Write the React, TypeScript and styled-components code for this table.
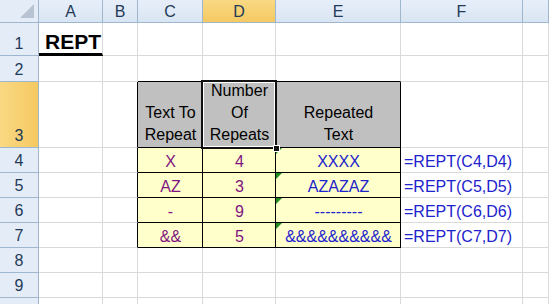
import React from "react";
import styled, { createGlobalStyle } from "styled-components";

const GRID = "#d9d9d9";
const HEAD_LINE = "#9eb6ce";
const INK = "#000";

type Kind = "blank" | "title" | "head" | "data";

interface CellSpec {
  text?: string;
  kind?: Kind;
  color?: string;
  align?: "left" | "center" | "right";
  right?: string;
  bottom?: string;
  flag?: boolean;
  selected?: boolean;
}

const GlobalStyle = createGlobalStyle`
  html, body {
    margin: 0;
    padding: 0;
    background: #fff;
    overflow: hidden;
  }
  body {
    font-family: "Liberation Sans", Arial, sans-serif;
  }
`;

const Sheet = styled.div`
  display: grid;
  grid-template-columns: 39px 64px 35px 65px 73px 125px 122px 1fr;
  grid-template-rows: 23px 33px 26px 66px repeat(6, 25px) 7px;
  width: 549px;
  height: 304px;
  overflow: hidden;
`;

const Corner = styled.div`
  position: relative;
  box-sizing: border-box;
  background: #e4ecf7;
  border-right: 1px solid ${HEAD_LINE};
  border-bottom: 1px solid ${HEAD_LINE};
`;

const CornerMark = styled.span`
  position: absolute;
  right: 4px;
  bottom: 4px;
  width: 0;
  height: 0;
  border-left: 14px solid transparent;
  border-bottom: 14px solid #b7c3d2;
`;

const ColHead = styled.div<{ $active?: boolean }>`
  box-sizing: border-box;
  display: flex;
  align-items: center;
  justify-content: center;
  background: ${(p) =>
    p.$active
      ? "linear-gradient(#f9d983, #f5c962)"
      : "linear-gradient(#e6eef9, #dae5f3)"};
  border-right: 1px solid ${HEAD_LINE};
  border-bottom: 1px solid ${HEAD_LINE};
  color: #233a57;
  font-size: 16px;
  padding-top: 1px;
`;

const RowHead = styled.div<{ $active?: boolean }>`
  box-sizing: border-box;
  display: flex;
  align-items: flex-end;
  justify-content: center;
  overflow: hidden;
  padding-bottom: 2px;
  background: ${(p) =>
    p.$active
      ? "linear-gradient(90deg, #f9d983, #f5c962)"
      : "#e4ecf7"};
  border-right: 1px solid ${HEAD_LINE};
  border-bottom: 1px solid ${HEAD_LINE};
  color: #233a57;
  font-size: 16px;
  line-height: 18px;
`;

const Cell = styled.div<{
  $kind: Kind;
  $color: string;
  $align: string;
  $right: string;
  $bottom: string;
}>`
  position: relative;
  box-sizing: border-box;
  display: flex;
  align-items: flex-end;
  justify-content: ${(p) =>
    p.$align === "left" ? "flex-start" : p.$align === "right" ? "flex-end" : "center"};
  text-align: ${(p) => p.$align};
  padding: 0 2px 1px 3px;
  white-space: ${(p) => (p.$kind === "head" ? "pre-line" : "nowrap")};
  background: ${(p) =>
    p.$kind === "head" ? "#c0c0c0" : p.$kind === "data" ? "#ffffcc" : "#fff"};
  border-right: 1px solid ${(p) => p.$right};
  border-bottom: ${(p) => (p.$kind === "title" ? "3px" : "1px")} solid
    ${(p) => p.$bottom};
  color: ${(p) => p.$color};
  font-size: ${(p) => (p.$kind === "title" ? "21px" : "16px")};
  font-weight: ${(p) => (p.$kind === "title" ? 700 : 400)};
  line-height: ${(p) => (p.$kind === "head" ? "22px" : "18px")};
  ${(p) => p.$kind === "title" && "padding-left: 6px; padding-bottom: 2px;"}
`;

// little green "inconsistent formula" marker in the top-left corner
const Flag = styled.span`
  position: absolute;
  top: 0;
  left: 0;
  width: 0;
  height: 0;
  border-top: 6px solid #1e8c1e;
  border-right: 6px solid transparent;
`;

const Selection = styled.span`
  position: absolute;
  top: -2px;
  left: -2px;
  right: -2px;
  bottom: -2px;
  border: 2px solid #111;
  box-shadow: inset 0 0 0 1px #fff;
  z-index: 2;
  pointer-events: none;
`;

const FillHandle = styled.span`
  position: absolute;
  right: -5px;
  bottom: -5px;
  width: 5px;
  height: 5px;
  background: #111;
  border: 1px solid #fff;
  z-index: 3;
`;

// G is only partly on screen, so its letter sits past the right edge
const columns = ["A", "B", "C", "D", "E", "F", ""];

const PURPLE = "#7f1480";
const BLUE = "#1c22cc";

const entries = [
  { text: "X", count: "4", result: "XXXX" },
  { text: "AZ", count: "3", result: "AZAZAZ" },
  { text: "-", count: "9", result: "---------" },
  { text: "&&", count: "5", result: "&&&&&&&&&&" },
];

function buildRows(): CellSpec[][] {
  const rows: CellSpec[][] = [];
  const blank = (): CellSpec[] => columns.map(() => ({}));

  const r1 = blank();
  r1[0] = { text: "REPT", kind: "title", align: "left", bottom: INK };
  rows.push(r1);

  const r2 = blank();
  [2, 3, 4].forEach((i) => (r2[i] = { bottom: INK }));
  rows.push(r2);

  const r3 = blank();
  r3[1] = { right: INK };
  r3[2] = { text: "Text To\nRepeat", kind: "head", right: INK, bottom: INK };
  r3[3] = { text: "Number\nOf\nRepeats", kind: "head", right: INK, bottom: INK, selected: true };
  r3[4] = { text: "Repeated\nText", kind: "head", right: INK, bottom: INK };
  rows.push(r3);

  entries.forEach((e, i) => {
    const r = blank();
    r[1] = { right: INK };
    r[2] = { text: e.text, kind: "data", color: PURPLE, right: INK, bottom: INK };
    r[3] = { text: e.count, kind: "data", color: PURPLE, right: INK, bottom: INK };
    r[4] = { text: e.result, kind: "data", color: BLUE, right: INK, bottom: INK, flag: true };
    r[5] = { text: `=REPT(C${i + 4},D${i + 4})`, color: BLUE, align: "left" };
    rows.push(r);
  });

  rows.push(blank(), blank(), blank());
  return rows;
}

const rows = buildRows();

const App: React.FC = () => {
  return (
    <>
      <GlobalStyle />
      <Sheet>
        <Corner>
          <CornerMark />
        </Corner>
        {columns.map((c, i) => (
          <ColHead key={i} $active={c === "D"}>
            {c}
          </ColHead>
        ))}
        {rows.map((row, r) => (
          <React.Fragment key={r}>
            {/* row 10 only peeks in at the bottom edge, its number is below the fold */}
            <RowHead $active={r === 2}>{r < 9 ? r + 1 : ""}</RowHead>
            {row.map((cell, c) => (
              <Cell
                key={c}
                $kind={cell.kind ?? "blank"}
                $color={cell.color ?? "#000"}
                $align={cell.align ?? "center"}
                $right={cell.right ?? GRID}
                $bottom={cell.bottom ?? GRID}
              >
                {cell.flag && <Flag />}
                {cell.text}
                {cell.selected && (
                  <Selection>
                    <FillHandle />
                  </Selection>
                )}
              </Cell>
            ))}
          </React.Fragment>
        ))}
      </Sheet>
    </>
  );
};

export default App;
